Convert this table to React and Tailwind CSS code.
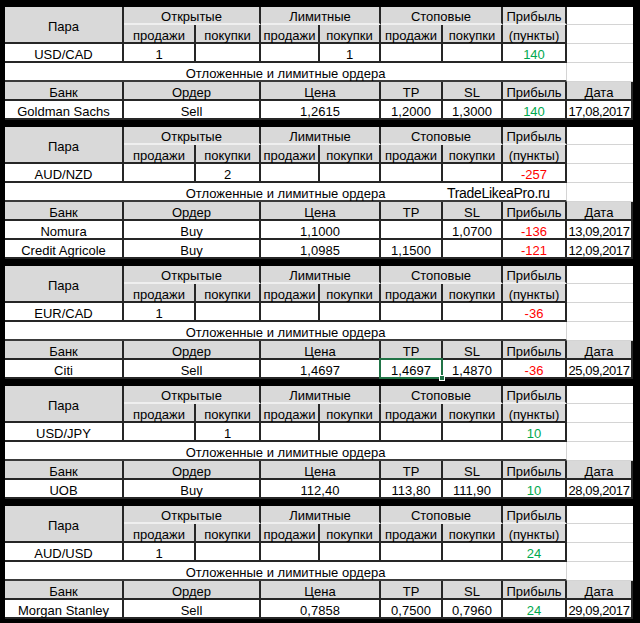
import React from 'react';

const dark = 'border-r-2 border-b-2 border-r-[#262626] border-b-[#262626]';
const hdr = 'bg-[#d9d9d9] ' + dark;
const hdrTop = 'bg-[#d9d9d9] border-r-2 border-b-2 border-r-[#262626] border-b-[#efefef]';
const cell = 'bg-white ' + dark;
const side = 'bg-white border-b border-b-[#d4d4d4]';

const green = 'text-[#00a84f]';
const red = 'text-[#ff0000]';

const blocks = [
  {
    pair: 'USD/CAD',
    vals: ['1', '', '', '1', '', ''],
    profit: '140',
    up: true,
    orders: [['Goldman Sachs', 'Sell', '1,2615', '1,2000', '1,3000', '140', '17,08,2017']],
  },
  {
    pair: 'AUD/NZD',
    vals: ['', '2', '', '', '', ''],
    profit: '-257',
    up: false,
    mark: true,
    orders: [
      ['Nomura', 'Buy', '1,1000', '', '1,0700', '-136', '13,09,2017'],
      ['Credit Agricole', 'Buy', '1,0985', '1,1500', '', '-121', '12,09,2017'],
    ],
  },
  {
    pair: 'EUR/CAD',
    vals: ['1', '', '', '', '', ''],
    profit: '-36',
    up: false,
    selected: true,
    orders: [['Citi', 'Sell', '1,4697', '1,4697', '1,4870', '-36', '25,09,2017']],
  },
  {
    pair: 'USD/JPY',
    vals: ['', '1', '', '', '', ''],
    profit: '10',
    up: true,
    orders: [['UOB', 'Buy', '112,40', '113,80', '111,90', '10', '28,09,2017']],
  },
  {
    pair: 'AUD/USD',
    vals: ['1', '', '', '', '', ''],
    profit: '24',
    up: true,
    orders: [['Morgan Stanley', 'Sell', '0,7858', '0,7500', '0,7960', '24', '29,09,2017']],
  },
];

function C({ className = '', children }) {
  return (
    <div className={`flex items-center justify-center whitespace-nowrap leading-none pt-[3px] ${className}`}>
      {children}
    </div>
  );
}

function Block({ b }) {
  const pc = b.up ? green : red;
  const rows = b.orders.length > 1
    ? 'grid-rows-[18px_repeat(6,19px)]'
    : 'grid-rows-[18px_repeat(5,19px)]';

  return (
    <div className={`grid grid-cols-[119px_72px_65px_59px_61px_62px_60px_64px_66px] ${rows}`}>
      <C className={`row-span-2 ${hdr}`}>Пара</C>
      <C className={`col-span-2 ${hdrTop}`}>Открытые</C>
      <C className={`col-span-2 ${hdrTop}`}>Лимитные</C>
      <C className={`col-span-2 ${hdrTop}`}>Стоповые</C>
      <C className={hdrTop}>Прибыль</C>
      <C className={side} />

      <C className={hdr}>продажи</C>
      <C className={hdr}>покупки</C>
      <C className={hdr}>продажи</C>
      <C className={hdr}>покупки</C>
      <C className={hdr}>продажи</C>
      <C className={hdr}>покупки</C>
      <C className={hdr}>(пункты)</C>
      <C className={side} />

      <C className={cell}>{b.pair}</C>
      {b.vals.map((v, i) => (
        <C key={i} className={cell}>{v}</C>
      ))}
      <C className={`${cell} ${pc}`}>{b.profit}</C>
      <C className={side} />

      <C className="relative col-span-8 bg-white border-r border-b-2 border-r-[#d4d4d4] border-b-[#3a3a3a]">
        Отложенные и лимитные ордера
        {b.mark && (
          <span className="absolute left-[442px] top-[2px] text-[14px] leading-[16px] tracking-[-0.3px]">TradeLikeaPro.ru</span>
        )}
      </C>
      <C className={side} />

      <C className={hdr}>Банк</C>
      <C className={`col-span-2 ${hdr}`}>Ордер</C>
      <C className={`col-span-2 ${hdr}`}>Цена</C>
      <C className={hdr}>TP</C>
      <C className={hdr}>SL</C>
      <C className={hdr}>Прибыль</C>
      <C className={hdr}>Дата</C>

      {b.orders.map((o, i) => (
        <React.Fragment key={i}>
          <C className={cell}>{o[0]}</C>
          <C className={`col-span-2 ${cell}`}>{o[1]}</C>
          <C className={`col-span-2 ${cell}`}>{o[2]}</C>
          <C className={`relative ${cell}`}>
            {o[3]}
            {b.selected && (
              <>
                <div className="absolute -left-[2px] -top-[2px] -right-[2px] -bottom-[2px] border-2 border-[#217346]" />
                <div className="absolute -right-[4px] -bottom-[4px] w-[6px] h-[6px] bg-[#217346] border border-white" />
              </>
            )}
          </C>
          <C className={cell}>{o[4]}</C>
          <C className={`${cell} ${o[5].startsWith('-') ? red : green}`}>{o[5]}</C>
          <C className={`${cell} tracking-[-0.4px]`}>{o[6]}</C>
        </React.Fragment>
      ))}
    </div>
  );
}

export default function App() {
  return (
    <div className="w-[640px] h-[623px] overflow-hidden bg-black pl-[5px] pr-[7px] pt-[7px] font-['Liberation_Sans',Arial,sans-serif] text-[13px] text-black">
      <div className="flex flex-col gap-[7px]">
        {blocks.map((b, i) => (
          <Block key={i} b={b} />
        ))}
      </div>
    </div>
  );
}
